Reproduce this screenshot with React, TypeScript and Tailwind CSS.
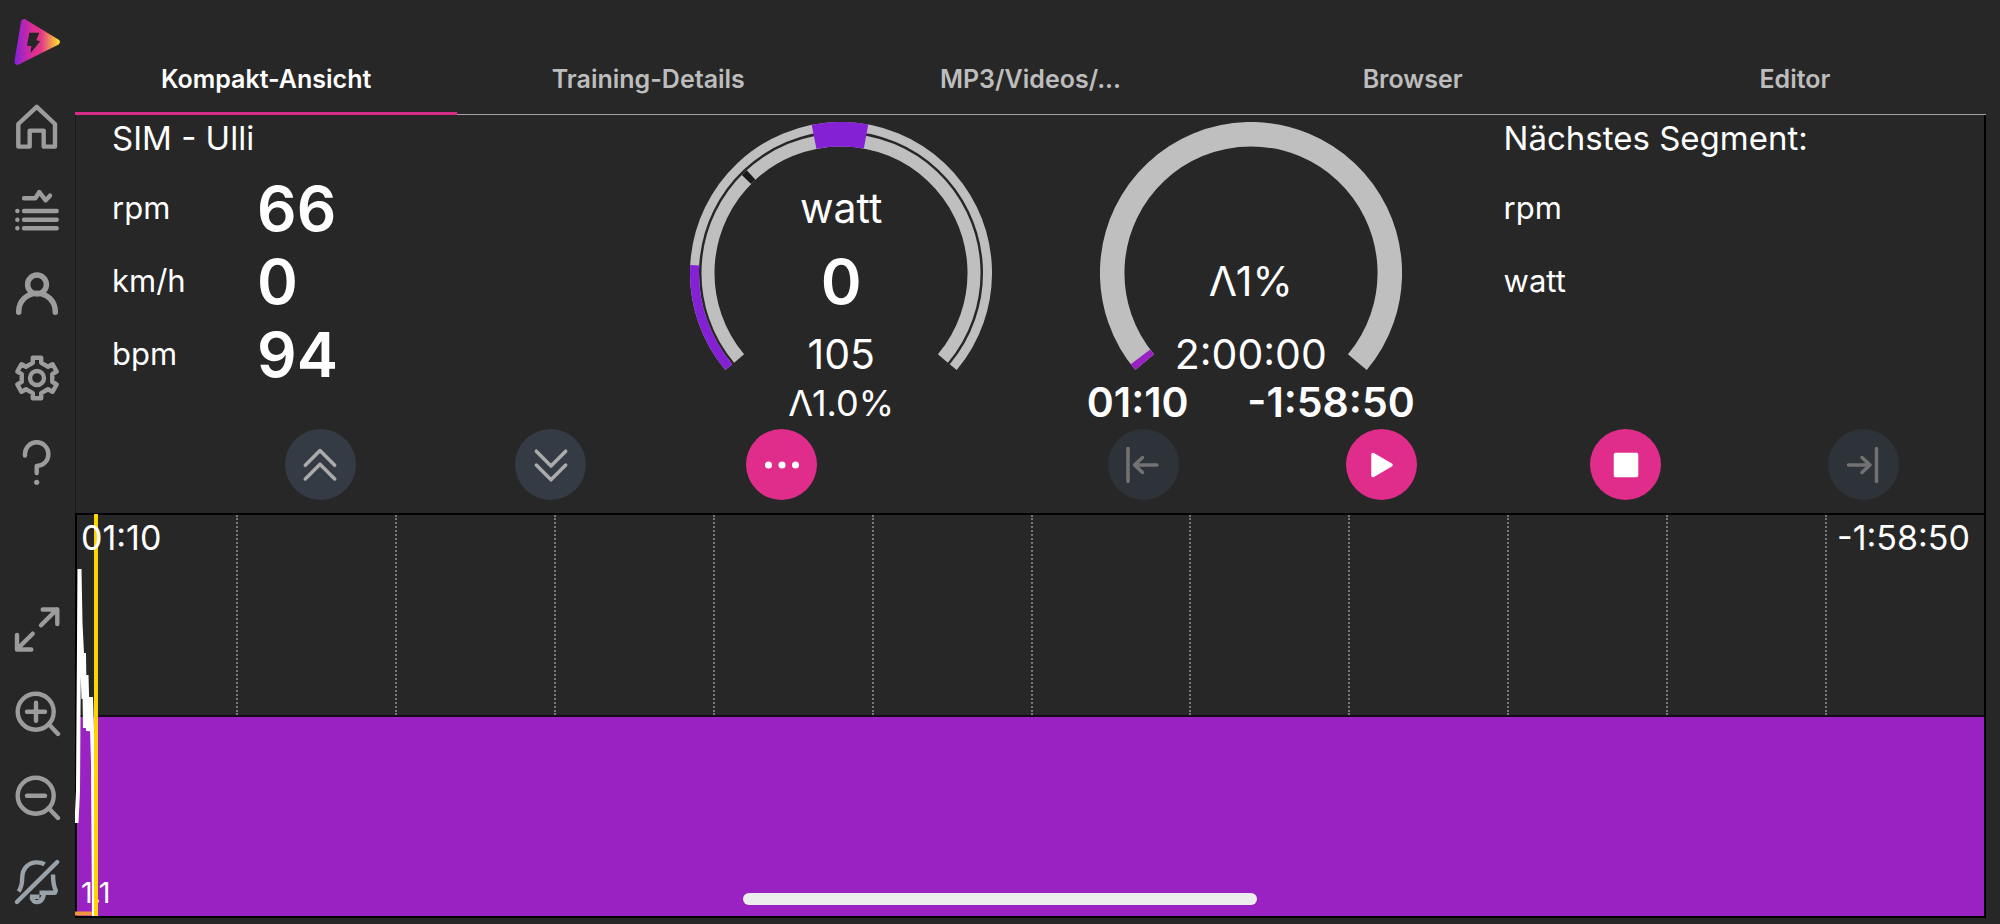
import React from "react";

const tabs = ["Kompakt-Ansicht", "Training-Details", "MP3/Videos/...", "Browser", "Editor"];

const stats = [
  { label: "rpm", value: "66" },
  { label: "km/h", value: "0" },
  { label: "bpm", value: "94" },
];

const gearPoints = [0, 60, 120, 180, 240, 300]
  .flatMap((deg) => {
    const a = (deg * Math.PI) / 180;
    return [
      [-4.2, -15.2],
      [-4.2, -20.3],
      [4.2, -20.3],
      [4.2, -15.2],
    ].map(([x, y]) => `${24 + x * Math.cos(a) - y * Math.sin(a)},${24 + x * Math.sin(a) + y * Math.cos(a)}`);
  })
  .join(" ");

const magnifier = "M36.5 35 45 44M4.7 21.7a18 18 0 1 0 36 0a18 18 0 1 0-36 0M14 21.7h18";

const icons = {
  home: <path d="M23.7 4.8 5.3 22v22.6h11.4v-16h14v16H42V22z" />,
  workouts: (
    <path d="M11 12.3h11.3l4-6.3 6.4 8.3 4.3-4.6M11 25h32.7M11 33.7h32.7M11 42.3h32.7M4.3 25h.1M4.3 33.7h.1M4.3 42.3h.1" />
  ),
  profile: (
    <g strokeWidth={5.5}>
      <circle cx="24" cy="14.5" r="9.4" />
      <path d="M5.7 42.2v-.7a18.3 18.3 0 0 1 36.6 0v.7" />
    </g>
  ),
  settings: (
    <>
      <polygon points={gearPoints} />
      <circle cx="24" cy="24" r="7" />
    </>
  ),
  help: (
    <>
      <path d="M12 17.5V16a11.7 11.7 0 1 1 23.4 0c0 7-5 11.6-11.7 12v7" />
      <circle cx="23.7" cy="44.3" r="2.6" fill="#9c9c9c" stroke="none" />
    </>
  ),
  expand: <path d="M28 19.3l16-16M29.7 3.5H44.3V18M19.7 27.7 4 43.3M4 29v14.5h14.3" />,
  zoomIn: <path d={magnifier + "M23 12.7v18"} />,
  zoomOut: <path d={magnifier} />,
  mute: (
    <g stroke="#9aa2a9">
      <path d="M3.9 44 44.2 4" />
      <path strokeLinecap="butt" d="M5.6 33.4C8 30 9.2 26 9.2 20C9.2 11 15 4.4 23.7 4.4C27 4.4 29.6 5 31.6 6.4" />
      <path strokeLinecap="butt" d="M40 16.5C40 25 40.5 28 42.8 32.6L42 34.8H26.5" />
      <path strokeLinecap="butt" d="M17 38.8h9.5M18.6 39c1 7 10.4 7.5 12.3-3" />
    </g>
  ),
};

const navTop: [string, React.ReactNode][] = [
  ["Start", icons.home],
  ["Trainings", icons.workouts],
  ["Profil", icons.profile],
  ["Einstellungen", icons.settings],
  ["Hilfe", icons.help],
];

const navBottom: [string, React.ReactNode][] = [
  ["Vollbild", icons.expand],
  ["Vergrößern", icons.zoomIn],
  ["Verkleinern", icons.zoomOut],
  ["Ton aus", icons.mute],
];

const Logo = () => (
  <svg viewBox="0 0 48 48" className="size-12">
    <defs>
      <linearGradient id="logo" x1="0" y1="0" x2="48" y2="0" gradientUnits="userSpaceOnUse">
        <stop offset="0" stopColor="#7d1fe0" />
        <stop offset=".4" stopColor="#dc2c96" />
        <stop offset=".58" stopColor="#e2358a" />
        <stop offset=".96" stopColor="#fbe22a" />
      </linearGradient>
    </defs>
    <path d="M11 4 43.8 24 4.4 43.8z" fill="url(#logo)" stroke="url(#logo)" strokeWidth="6" strokeLinejoin="round" />
    <path d="M16.3 14.7h10l-3 7.6 3.9 1-9.8 11.9 1-7.2-4.4-.3z" fill="#262626" />
  </svg>
);

const SideButton = ({ label, children }: { label: string; children: React.ReactNode }) => (
  <button aria-label={label} className="flex h-21 items-center justify-center">
    <svg
      viewBox="0 0 48 48"
      className="size-12"
      fill="none"
      stroke="#9c9c9c"
      strokeWidth={4.4}
      strokeLinecap="round"
      strokeLinejoin="round"
    >
      {children}
    </svg>
  </button>
);

// 0 degrees points straight up, angles grow clockwise
const arc = (r: number, from: number, to: number) => {
  const point = (deg: number) => {
    const a = (deg * Math.PI) / 180;
    return `${151 + r * Math.sin(a)} ${151 - r * Math.cos(a)}`;
  };
  return `M${point(from)}A${r} ${r} 0 ${to - from > 180 ? 1 : 0} 1 ${point(to)}`;
};

const Gauge = ({ drawing, children }: { drawing: React.ReactNode; children: React.ReactNode }) => (
  <div className="grid justify-items-center text-[41px]">
    <svg viewBox="0 0 302 250" className="col-start-1 row-start-1 mt-[7px] h-[250px] w-[302px]" fill="none">
      {drawing}
    </svg>
    <div className="col-start-1 row-start-1 flex w-[328px] flex-col items-center pt-[57px]">{children}</div>
  </div>
);

const Line = ({ children }: { children?: React.ReactNode }) => (
  <div className="flex h-[73px] items-center">{children}</div>
);

const RoundButton = ({
  label,
  tone,
  children,
}: {
  label: string;
  tone: "pink" | "slate" | "off";
  children: React.ReactNode;
}) => {
  const tones = {
    pink: "bg-[#e02d8c] text-white",
    slate: "bg-[#353b45] text-[#ababab]",
    off: "bg-[#2e3239] text-[#727272]",
  };
  return (
    <button
      aria-label={label}
      disabled={tone === "off"}
      className={`flex size-[71px] items-center justify-center justify-self-center rounded-full ${tones[tone]}`}
    >
      <svg
        viewBox="0 0 48 48"
        className="size-12"
        fill="none"
        stroke="currentColor"
        strokeWidth={3.5}
        strokeLinecap="round"
        strokeLinejoin="round"
      >
        {children}
      </svg>
    </button>
  );
};

const Dashboard = () => (
  <section className="border-l border-r-2 border-l-[#1b1b1b] border-r-black">
    <div className="grid grid-cols-[561fr_410fr_410fr_529fr]">
      <div className="pl-9">
        <h1 className="mb-[9px] flex h-12 items-center text-[33px]">SIM - Ulli</h1>
        <dl>
          {stats.map((s) => (
            <div key={s.label} className="flex h-[73px] items-center">
              <dt className="w-[145px] text-[31px]">{s.label}</dt>
              <dd className="text-[62px] font-semibold">{s.value}</dd>
            </div>
          ))}
        </dl>
      </div>

      <Gauge
        drawing={
          <>
            <path d={arc(146.5, -130, 130)} stroke="#bfbfbf" strokeWidth="9" />
            <path d={arc(133, -130, 130)} stroke="#bfbfbf" strokeWidth="13" />
            <path d={arc(146.5, -130, -87)} stroke="#8421d4" strokeWidth="9" />
            <path d={arc(138.8, -11.2, 10.4)} stroke="#8421d4" strokeWidth="24.5" />
            <path d={arc(133, -45.3, -42.5)} stroke="#1a1a1a" strokeWidth="13" />
          </>
        }
      >
        <Line>watt</Line>
        <Line>
          <span className="text-[62px] font-semibold">0</span>
        </Line>
        <Line>105</Line>
        <div className="flex h-6 items-center text-[36px]">Λ1.0%</div>
      </Gauge>

      <Gauge
        drawing={
          <>
            <path d={arc(138.8, -130, 130)} stroke="#bfbfbf" strokeWidth="24.5" />
            <path d={arc(138.8, -130, -127.2)} stroke="#9b22c2" strokeWidth="24.5" />
          </>
        }
      >
        <Line />
        <Line>Λ1%</Line>
        <Line>2:00:00</Line>
        <div className="flex h-6 items-center justify-between self-stretch font-semibold">
          <span>01:10</span>
          <span>-1:58:50</span>
        </div>
      </Gauge>

      <div className="pl-12 text-[31px]">
        <h2 className="mb-[9px] flex h-12 items-center text-[33px]">Nächstes Segment:</h2>
        <Line>rpm</Line>
        <Line>watt</Line>
      </div>
    </div>

    <div className="grid grid-cols-[129fr_231fr_231fr_231fr_131fr_231fr_245fr_245fr_231fr_5fr] pt-[14px] pb-[13px]">
      <span />
      <RoundButton label="Mehr Last" tone="slate">
        <path d="M9.3 24.3 24 9.5l14.7 14.8M9.3 38 24 23.2 38.7 38" />
      </RoundButton>
      <RoundButton label="Weniger Last" tone="slate">
        <path d="M9.3 10.2 24 25l14.7-14.8M9.3 24 24 38.8 38.7 24" />
      </RoundButton>
      <RoundButton label="Mehr" tone="pink">
        <g fill="currentColor" stroke="none">
          <circle cx="10.5" cy="24" r="3.5" />
          <circle cx="24" cy="24" r="3.5" />
          <circle cx="37.5" cy="24" r="3.5" />
        </g>
      </RoundButton>
      <span />
      <RoundButton label="Zurück" tone="off">
        <path d="M9 7.5v33M38 24H15.5M23.5 16.5l-8 7.5 8 7.5" />
      </RoundButton>
      <RoundButton label="Start" tone="pink">
        <path d="M16 13.5v21L34 24z" fill="currentColor" />
      </RoundButton>
      <RoundButton label="Stopp" tone="pink">
        <rect x="13.5" y="13.5" width="21" height="21" fill="currentColor" />
      </RoundButton>
      <RoundButton label="Weiter" tone="off">
        <path d="M36.5 7.5v33M8.5 24H30M22 16.5l8 7.5-8 7.5" />
      </RoundButton>
    </div>
  </section>
);

const Chart = () => (
  <section className="relative mb-[6px] flex flex-1 flex-col border-2 border-black text-[34px] leading-none">
    <div className="grid flex-1 grid-cols-12">
      {Array.from({ length: 12 }, (_, i) => (
        <div key={i} className={i > 0 ? "border-l-2 border-dotted border-[#777]" : ""} />
      ))}
    </div>
    <div className="flex flex-1 items-end border-t-2 border-[#180a1c] bg-[#9b22c2]">
      <span className="mb-[9px] ml-1 text-[29px]">1.1</span>
    </div>

    {/* recorded power and current position */}
    <svg className="absolute -top-[2px] -left-[2px] h-[404px] w-8" viewBox="0 0 32 404" fill="none">
      <path d="M0 400.5h22" stroke="#f0963c" strokeWidth="4" />
      <path
        d="M1.5 310 3 278 4.5 56 5.5 110 7 140 8.5 186 9 140 10 215 11.5 162 13 218 15 200 16 184 18 250 19 403"
        stroke="#fff"
        strokeWidth="4"
        strokeLinejoin="bevel"
      />
      <path d="M21 1v402" stroke="#ffd500" strokeWidth="4" />
    </svg>
    <div className="absolute inset-x-0 top-[6px] flex justify-between pr-[14px] pl-1">
      <span>01:10</span>
      <span>-1:58:50</span>
    </div>
  </section>
);

const App = () => (
  <div className="relative flex min-h-screen bg-[#272727] pr-[14px] font-['Inter',sans-serif] text-white">
    <nav className="flex w-[75px] flex-col pr-px">
      <a href="#" aria-label="Startseite" className="flex h-21 items-center justify-center">
        <Logo />
      </a>
      {navTop.map(([label, icon]) => (
        <SideButton key={label} label={label}>
          {icon}
        </SideButton>
      ))}
      <div className="mt-auto flex flex-col">
        {navBottom.map(([label, icon]) => (
          <SideButton key={label} label={label}>
            {icon}
          </SideButton>
        ))}
      </div>
    </nav>

    <main className="flex flex-1 flex-col">
      <div role="tablist" className="grid h-[115px] grid-cols-5 pt-12 text-[25px] font-semibold">
        {tabs.map((tab, i) => (
          <button
            key={tab}
            role="tab"
            aria-selected={i === 0}
            className={
              i === 0
                ? "border-b-3 border-[#d92c88]"
                : "border-b border-[#a3a3a3] pb-[2px] text-[#bdbdbd]"
            }
          >
            {tab}
          </button>
        ))}
      </div>
      <Dashboard />
      <Chart />
    </main>

    <div className="absolute inset-x-0 bottom-[19px] mx-auto h-3 w-[514px] rounded-full bg-[#ededed]" />
  </div>
);

export default App;
